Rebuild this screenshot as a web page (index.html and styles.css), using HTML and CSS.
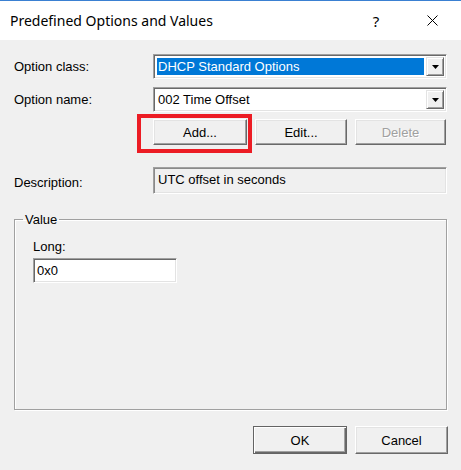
FILE: index.html
```html
<!DOCTYPE html>
<html lang="en">
<head>
<meta charset="utf-8">
<title>Predefined Options and Values</title>
<link rel="stylesheet" href="styles.css">
</head>
<body>
<div class="window">
  <div class="titlebar">
    <span class="title">Predefined Options and Values</span>
    <span class="tb-btn help">?</span>
    <span class="tb-btn close">
      <svg width="11" height="11" viewBox="0 0 11 11"><path d="M0.5 0.5 L10.5 10.5 M10.5 0.5 L0.5 10.5" stroke="#000" stroke-width="1" fill="none"/></svg>
    </span>
  </div>
  <div class="content">
    <div class="row">
      <span class="lbl">Option class:</span>
      <div class="combo">
        <div class="combo-value selected">DHCP Standard Options</div>
        <div class="drop"><svg width="7" height="4" viewBox="0 0 7 4"><path d="M0 0 H7 L3.5 4 Z" fill="#000"/></svg></div>
      </div>
    </div>
    <div class="row row2">
      <span class="lbl">Option name:</span>
      <div class="combo">
        <div class="combo-value">002 Time Offset</div>
        <div class="drop"><svg width="7" height="4" viewBox="0 0 7 4"><path d="M0 0 H7 L3.5 4 Z" fill="#000"/></svg></div>
      </div>
    </div>
    <div class="btnrow">
      <button class="btn btn-add">Add...</button>
      <button class="btn btn-edit">Edit...</button>
      <button class="btn btn-del" disabled>Delete</button>
      <span class="highlight"></span>
    </div>
    <div class="row desc-row">
      <span class="lbl">Description:</span>
      <div class="readonly">UTC offset in seconds</div>
    </div>
    <fieldset class="group">
      <legend>Value</legend>
      <div class="group-body">
        <span class="lbl-long">Long:</span>
        <div class="textbox">0x0</div>
      </div>
    </fieldset>
    <div class="footer">
      <button class="btn btn-ok">OK</button>
      <button class="btn btn-cancel">Cancel</button>
    </div>
  </div>
</div>
</body>
</html>
```
FILE: styles.css
```css
* { box-sizing: border-box; }
html, body { margin: 0; padding: 0; }
body {
  width: 461px;
  height: 470px;
  overflow: hidden;
  background: #f0f0f0;
  font-family: "Liberation Sans", Arial, sans-serif;
  font-size: 13px;
  color: #000;
}
.window {
  width: 461px;
  height: 470px;
  display: flex;
  flex-direction: column;
  border-top: 1px solid #3a80d2;
}
.titlebar {
  height: 39px;
  background: #fff;
  display: flex;
  align-items: center;
  padding-left: 10px;
  flex: none;
}
.title {
  font-family: "Noto Sans", "Segoe UI", sans-serif;
  font-size: 14px;
  color: #000;
}
.tb-btn {
  width: 46px;
  height: 39px;
  display: flex;
  align-items: center;
  justify-content: center;
}
.help {
  margin-left: auto;
  font-family: "Noto Sans", sans-serif;
  font-size: 15px;
}
.close { margin-left: 10px; margin-right: 6px; }

.content {
  flex: 1;
  display: flex;
  flex-direction: column;
  padding: 14px 13px 0 14px;
}
.row {
  display: flex;
  align-items: center;
  height: 25px;
}
.row2 { margin-top: 8px; }
.lbl { width: 139px; flex: none; }

.combo {
  width: 294px;
  height: 25px;
  display: flex;
  background: #fff;
  border: 1px solid;
  border-color: #a0a0a0 #fff #fff #a0a0a0;
  box-shadow: inset 1px 1px 0 #696969, inset -1px -1px 0 #e3e3e3;
  padding: 2px;
}
.combo-value {
  flex: 1;
  display: flex;
  align-items: center;
  padding-left: 2px;
  margin-right: 1px;
}
.combo-value.selected {
  background: #0078d7;
  color: #fff;
  margin: 1px 2px 1px 1px;
  padding-left: 1px;
}
.drop {
  width: 18px;
  flex: none;
  display: flex;
  align-items: center;
  justify-content: center;
  background: #f0f0f0;
  border: 1px solid;
  border-color: #e3e3e3 #696969 #696969 #e3e3e3;
  box-shadow: inset 1px 1px 0 #fff, inset -1px -1px 0 #a0a0a0;
}

.btn {
  font-family: "Liberation Sans", Arial, sans-serif;
  font-size: 13px;
  color: #000;
  background: #f0f0f0;
  border: 1px solid;
  border-color: #fff #696969 #696969 #fff;
  box-shadow: inset -1px -1px 0 #a0a0a0, inset 1px 1px 0 #e3e3e3;
  padding: 0;
  margin: 0;
}
.btnrow {
  position: relative;
  display: flex;
  gap: 8px;
  margin-top: 7px;
  margin-left: 139px;
  height: 26px;
}
.btn-add { width: 94px; }
.btn-edit { width: 92px; }
.btn-del { width: 91px; color: #a0a0a0; text-shadow: 1px 1px 0 #fff; }
.highlight {
  position: absolute;
  left: -16px;
  top: -5px;
  width: 115px;
  height: 39px;
  border: 4px solid #ec1c24;
  pointer-events: none;
}

.desc-row { margin-top: 22px; height: 27px; align-items: flex-start; }
.desc-row .lbl { padding-top: 8px; }
.readonly {
  width: 294px;
  height: 27px;
  border: 1px solid;
  border-color: #a0a0a0 #fff #fff #a0a0a0;
  box-shadow: inset 1px 1px 0 #8a8a8a, inset -1px -1px 0 #e3e3e3;
  padding: 4px 0 0 4px;
  background: #f0f0f0;
}

.group {
  margin: 18px 0 0 0;
  padding: 0;
  min-width: 0;
  width: 433px;
  height: 198px;
  border: 1px solid #a0a0a0;
  box-shadow: 1px 1px 0 #fff, inset 1px 1px 0 #fff;
}
.group legend {
  margin-left: 8px;
  padding: 0 2px;
  line-height: 15px;
}
.group-body {
  display: flex;
  flex-direction: column;
  align-items: flex-start;
  padding: 12px 0 0 18px;
  gap: 4px;
}
.lbl-long { line-height: 15px; }
.textbox {
  width: 144px;
  height: 25px;
  background: #fff;
  border: 1px solid;
  border-color: #a0a0a0 #fff #fff #a0a0a0;
  box-shadow: inset 1px 1px 0 #696969, inset -1px -1px 0 #e3e3e3;
  padding: 4px 0 0 3px;
}

.footer {
  display: flex;
  justify-content: flex-end;
  gap: 8px;
  margin-top: 16px;
}
.btn-ok {
  width: 94px;
  height: 28px;
  border: 1px solid #646464;
  box-shadow: inset 1px 1px 0 #fff, inset -1px -1px 0 #696969, inset -2px -2px 0 #a0a0a0;
}
.btn-cancel { width: 93px; height: 28px; }
```
